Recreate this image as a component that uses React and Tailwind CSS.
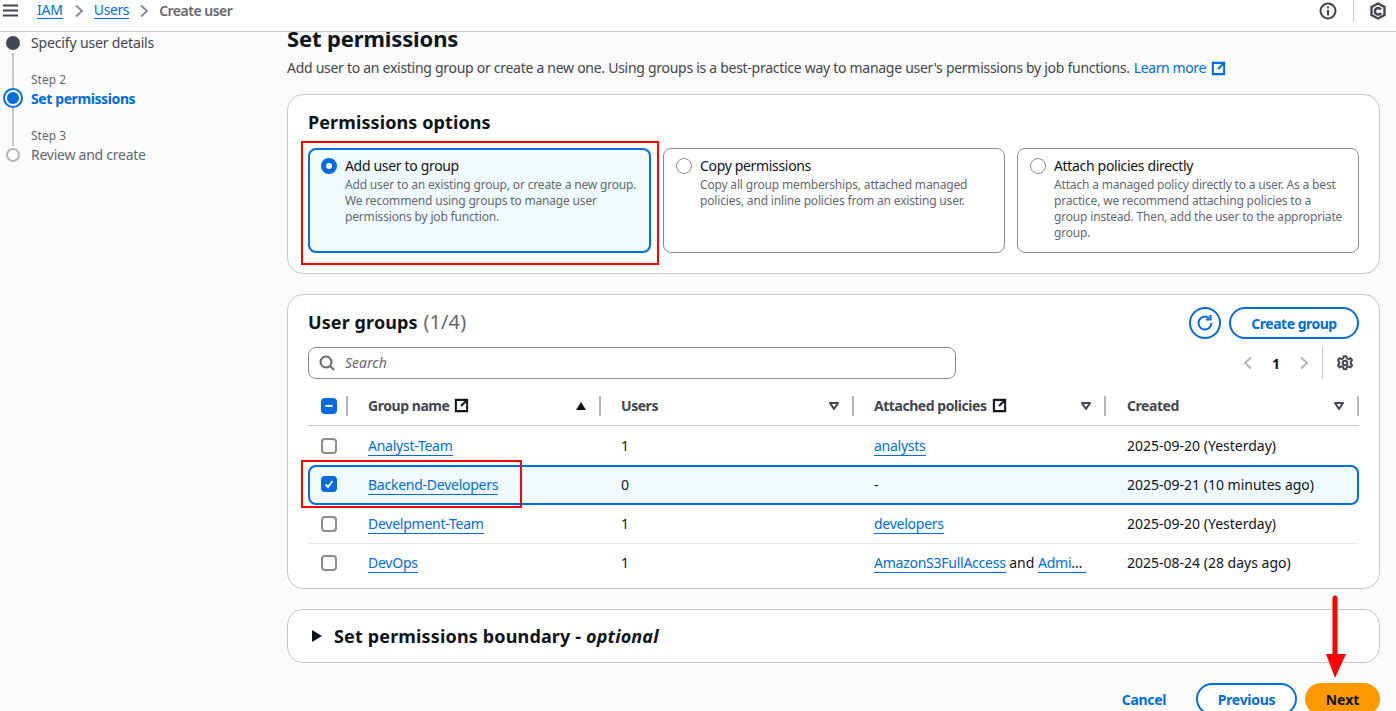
import React from "react";

const Ext = ({ className = "", s = 16 }) => (
  <svg width={s} height={s} viewBox="0 0 16 16" fill="none" stroke="currentColor" strokeWidth="2.2" className={`shrink-0 ${className}`}>
    <path d="M7 2H2v12h12V9" strokeLinecap="square" />
    <path d="M9 2h5v5" strokeLinecap="square" />
    <path d="M14 2 7.500 8.500" />
  </svg>
);

const Sep = () => <span className="block w-[2px] h-[20px] bg-[#b4b4bb]" />;

const Caret = () => (
  <svg width="12" height="10" viewBox="0 0 12 10" fill="none" stroke="#424650" strokeWidth="2" strokeLinejoin="round"><path d="M2 2h8L6 8z" /></svg>
);

const Box = ({ mode }) => {
  if (mode === "none") return <span className="block w-4 h-4 rounded-[4px] border-2 border-[#8c8c94] bg-white shrink-0" />;
  return (
    <span className="flex items-center justify-center w-4 h-4 rounded-[4px] bg-[#006ce0] shrink-0">
      <svg width="12" height="12" viewBox="0 0 12 12" fill="none" stroke="white" strokeWidth="2">
        {mode === "check" ? <path d="M2.500 6.500 5 9l4.500-6" /> : <path d="M2.500 6h7" />}
      </svg>
    </span>
  );
};

const A = ({ children }) => <a className="text-[#006ce0] border-b border-[#006ce0] leading-[17px] tracking-[-0.25px]">{children}</a>;

const Tile = ({ selected, title, lines }) => (
  <div className={`flex-1 min-w-0 h-[105px] rounded-lg flex gap-2 ${selected ? "border-2 border-[#006ce0] bg-[#f0fbff] pl-[11px] pt-[8px]" : "border border-[#8c8c94] bg-white pl-[12px] pt-[9px]"}`}>
    <span className={`w-4 h-4 rounded-full shrink-0 ${selected ? "border-[5px] border-[#006ce0] bg-white" : "border border-[#8c8c94] bg-white"}`} />
    <div className="min-w-0">
      <div className="text-[14px] leading-[16px] text-[#0f141a] tracking-[-0.33px]">{title}</div>
      <div className="text-[12px] leading-[16px] text-[#656871] mt-[3px] tracking-[-0.17px]">
        {lines.map((l) => <div key={l} className="whitespace-nowrap">{l}</div>)}
      </div>
    </div>
  </div>
);

const Row = ({ mode, name, users, policies, created, selected, top }) => (
  <div className={`grid items-center text-[14px] text-[#0f141a] ${selected ? "grid-cols-[58px_253px_253px_253px_1fr] h-[40px] -mb-px border-2 border-[#006ce0] rounded-lg bg-[#f0fbff] relative z-10 pb-px" : "grid-cols-[60px_253px_253px_253px_1fr] h-[39px]"} ${top ? "border-t border-[#e8e8ea] pb-px" : ""}`}>
    <div className={selected ? "pl-[11px] mb-[1px]" : "pl-[13px]"}><Box mode={mode} /></div>
    <div className="whitespace-nowrap"><A>{name}</A></div>
    <div>{users}</div>
    <div className="whitespace-nowrap">{policies}</div>
    <div className="whitespace-nowrap">{created}</div>
  </div>
);

const Head = ({ children, sort, ext, tight }) => (
  <div className={`flex items-center h-[39px] ${tight ? "pr-[1px]" : ""}`}>
    <span className="flex items-center gap-[5px] font-bold text-[14px] text-[#424650] whitespace-nowrap tracking-[-0.45px]">
      <span>{children}</span>
      {ext && <Ext s={15} className="text-[#0f141a]" />}
    </span>
    <span className="ml-auto flex items-center gap-[12px]">
      {sort === "up" ? (
        <svg width="12" height="10" viewBox="0 0 12 10" fill="#0f141a"><path d="M6 1 11 9H1z" /></svg>
      ) : (
        <Caret />
      )}
      <Sep />
    </span>
  </div>
);

export default function App() {
  return (
    <div className="w-[1396px] h-[711px] overflow-hidden bg-[#fbfbfb] flex flex-col relative" style={{ fontFamily: '"Noto Sans", "Open Sans", sans-serif' }}>
      <header className="h-[32px] shrink-0 bg-white border-b border-[#c6c6cd] flex items-center relative z-20 pb-[10px] pl-[3px] pr-[10px]">
        <svg width="15" height="13" viewBox="0 0 15 13" stroke="#424650" strokeWidth="2"><path d="M0 1.500h15M0 6.500h15M0 11.500h15" /></svg>
        <a className="ml-[19px] text-[14px] leading-[16px] text-[#006ce0] border-b border-[#006ce0] tracking-[-0.2px]">IAM</a>
        <svg className="ml-[11px] mr-[10px]" width="10" height="14" viewBox="0 0 10 14" fill="none" stroke="#8c8c94" strokeWidth="2"><path d="M2 1.500 8 7l-6 5.500" /></svg>
        <a className="text-[14px] leading-[16px] text-[#006ce0] border-b border-[#006ce0] tracking-[-0.4px]">Users</a>
        <svg className="ml-[10px] mr-[10px]" width="10" height="14" viewBox="0 0 10 14" fill="none" stroke="#8c8c94" strokeWidth="2"><path d="M2 1.500 8 7l-6 5.500" /></svg>
        <span className="text-[14px] font-semibold text-[#656871] tracking-[-0.5px]">Create user</span>
        <svg className="ml-auto" width="18" height="18" viewBox="0 0 18 18" fill="none" stroke="#424650" strokeWidth="2"><circle cx="9" cy="9" r="7.500" /><path d="M9 8v5.500M9 4.500v2" /></svg>
        <span className="mx-[16px] w-px h-[23px] bg-[#c6c6cd]" />
        <svg width="16" height="18" viewBox="0 0 16 18" fill="none" stroke="#424650" strokeWidth="2.4"><path d="M8 1.500 14.500 5v8L8 16.500 1.500 13V5z" /><path d="M11 7.500A3.300 3.300 0 1 0 11 11" /></svg>
      </header>

      <div className="flex-1 flex min-h-0">
        <aside className="w-[287px] shrink-0 pl-[6px] pt-[2px] text-[#424650]">
          <div className="flex gap-[11px] items-center h-[18px]">
            <span className="w-[14px] h-[14px] rounded-full bg-[#424650]" />
            <span className="text-[14px] leading-[18px] tracking-[-0.15px]">Specify user details</span>
          </div>
          <div className="flex">
            <span className="w-[2px] h-[35px] bg-[#c6c6cd] ml-[6px] mt-[1px]" />
            <span className="ml-[17px] mt-[20px] text-[12px] leading-[16px] text-[#656871]">Step 2</span>
          </div>
          <div className="flex items-center h-[20px] -ml-[3px] gap-[8px]">
            <span className="w-[20px] h-[20px] rounded-full border-2 border-[#006ce0] flex items-center justify-center"><span className="w-[12px] h-[12px] rounded-full bg-[#006ce0]" /></span>
            <span className="text-[14px] font-bold text-[#006ce0] tracking-[-0.4px]">Set permissions</span>
          </div>
          <div className="flex">
            <span className="w-[2px] h-[38px] bg-[#c6c6cd] ml-[6px]" />
            <span className="ml-[17px] mt-[20px] text-[12px] leading-[16px] text-[#656871]">Step 3</span>
          </div>
          <div className="flex gap-[11px] items-center h-[18px]">
            <span className="w-[14px] h-[14px] rounded-full border-2 border-[#b4b4bb] bg-white" />
            <span className="text-[14px] leading-[18px] text-[#656871] tracking-[-0.25px]">Review and create</span>
          </div>
        </aside>

        <main className="w-[1093px] -mt-[9px] shrink-0">
          <h1 className="text-[22px] leading-[30px] font-bold text-[#0f141a] tracking-[-0.13px]">Set permissions</h1>
          <p className="mt-[5px] text-[14px] leading-[20px] text-[#424650] flex items-center whitespace-nowrap tracking-[-0.28px]">
            Add user to an existing group or create a new one. Using groups is a best-practice way to manage user's permissions by job functions.
            <a className="ml-[4px] text-[#006ce0] tracking-[-0.4px]">Learn more</a>
            <Ext className="ml-[5px] text-[#006ce0]" s={15} />
          </p>

          <section className="mt-[16px] h-[180px] rounded-2xl border border-[#c6c6cd] bg-white px-[20px] pt-[14px]">
            <h2 className="text-[18px] leading-[26px] font-bold text-[#0f141a] tracking-[0.1px]">Permissions options</h2>
            <div className="mt-[13px] flex gap-[12px]">
              <Tile selected title="Add user to group" lines={["Add user to an existing group, or create a new group.", "We recommend using groups to manage user", "permissions by job function."]} />
              <Tile title="Copy permissions" lines={["Copy all group memberships, attached managed", "policies, and inline policies from an existing user."]} />
              <Tile title="Attach policies directly" lines={["Attach a managed policy directly to a user. As a best", "practice, we recommend attaching policies to a", "group instead. Then, add the user to the appropriate", "group."]} />
            </div>
          </section>

          <section className="mt-[20px] h-[295px] rounded-2xl border border-[#c6c6cd] bg-white px-[20px] pt-[12px]">
            <div className="flex items-center h-[32px]">
              <h2 className="text-[18px] font-bold text-[#0f141a] pb-[2px] tracking-[0.1px]">User groups <span className="font-normal text-[20px] text-[#656871] ml-[1px]">(1/4)</span></h2>
              <span className="ml-auto w-[32px] h-[32px] rounded-full border-2 border-[#006ce0] flex items-center justify-center">
                <svg width="18" height="18" viewBox="0 0 18 18" fill="none" stroke="#006ce0" strokeWidth="2"><path d="M15.500 9A6.500 6.500 0 1 1 13 3.900" /><path d="M14.500 1v4.500H10" /></svg>
              </span>
              <span className="ml-[8px] w-[130px] h-[32px] rounded-full border-2 border-[#006ce0] flex items-center justify-center text-[14px] font-bold text-[#006ce0] tracking-[-0.5px]">Create group</span>
            </div>
            <div className="mt-[8px] flex items-center h-[32px]">
              <div className="w-[648px] h-[32px] rounded-lg border border-[#8c8c94] flex items-center pl-[10px] gap-[10px]">
                <svg width="16" height="16" viewBox="0 0 16 16" fill="none" stroke="#656871" strokeWidth="2"><circle cx="7" cy="7" r="5.500" /><path d="m11 11 4 4" /></svg>
                <span className="text-[14px] italic text-[#656871] pb-[2px]">Search</span>
              </div>
              <div className="ml-auto flex items-center mr-[6px]">
                <svg width="10" height="14" viewBox="0 0 10 14" fill="none" stroke="#b4b4bb" strokeWidth="2"><path d="M8 1.500 2 7l6 5.500" /></svg>
                <span className="mx-[19px] text-[14px] font-bold text-[#0f141a]">1</span>
                <svg width="10" height="14" viewBox="0 0 10 14" fill="none" stroke="#b4b4bb" strokeWidth="2"><path d="M2 1.500 8 7l-6 5.500" /></svg>
                <span className="ml-[13px] w-px h-[32px] bg-[#c6c6cd]" />
                <svg className="ml-[14px]" width="16" height="16" viewBox="0 0 24 24" fill="none" stroke="#424650" strokeWidth="3"><circle cx="12" cy="12" r="3.500" /><path d="M10 2h4l.7 3 2.700 1.200 2.700-1.600 2.600 3-2 2.400v3.200l2 2.400-2.600 3-2.700-1.600-2.700 1.200-.7 3h-4l-.7-3-2.700-1.200-2.700 1.600-2.600-3 2-2.400v-3.200l-2-2.400 2.600-3 2.700 1.600L9.300 5z" strokeLinejoin="round" /></svg>
              </div>
            </div>
            <div className="mt-[7px] grid grid-cols-[40px_233px_233px_233px_1fr] gap-x-[20px] h-[40px] border-b border-[#c6c6cd]">
              <div className="flex items-center pl-[13px] gap-[9px]"><Box mode="minus" /><Sep /></div>
              <Head sort="up" ext>Group name</Head>
              <Head>Users</Head>
              <Head ext tight>Attached policies</Head>
              <Head>Created</Head>
            </div>
            <Row mode="none" name="Analyst-Team" users="1" policies={<A>analysts</A>} created="2025-09-20 (Yesterday)" />
            <Row selected mode="check" name="Backend-Developers" users="0" policies="-" created="2025-09-21 (10 minutes ago)" />
            <Row mode="none" name="Develpment-Team" users="1" policies={<A>developers</A>} created="2025-09-20 (Yesterday)" />
            <Row top mode="none" name="DevOps" users="1" policies={<span className="block w-[212px] truncate leading-[20px]"><A>AmazonS3FullAccess</A> and <A>AdministratorAccess</A></span>} created="2025-08-24 (28 days ago)" />
          </section>

          <section className="mt-[20px] h-[54px] rounded-2xl border border-[#c6c6cd] bg-white flex items-center pl-[23px] gap-[12px]">
            <svg width="11" height="12" viewBox="0 0 11 12" fill="#0f141a"><path d="M1 0v12l10-6z" /></svg>
            <h2 className="text-[18px] font-bold text-[#0f141a] pt-[1px] tracking-[0.15px]">Set permissions boundary - <i>optional</i></h2>
          </section>

          <div className="mt-[20px] flex items-center justify-end">
            <span className="text-[14px] font-bold text-[#006ce0] mr-[30px] tracking-[-0.35px]">Cancel</span>
            <span className="w-[101px] h-[32px] rounded-full border-2 border-[#006ce0] bg-white flex items-center justify-center text-[14px] font-bold text-[#006ce0] tracking-[-0.3px]">Previous</span>
            <span className="ml-[8px] w-[75px] h-[32px] rounded-full bg-[#ff9900] flex items-center justify-center text-[14px] font-bold text-[#0f141a]">Next</span>
          </div>
        </main>
      </div>

      <div className="absolute left-[301px] top-[141px] w-[358px] h-[124px] border-2 border-[#ff0000] z-30" />
      <div className="absolute left-[301px] top-[460px] w-[221px] h-[48px] border-2 border-[#ff0000] z-30" />
      <svg className="absolute left-[1320px] top-[590px] z-30" width="32" height="94" viewBox="0 0 32 94" fill="none">
        <path d="M15 8v60" stroke="#ff0000" strokeWidth="5" strokeLinecap="round" />
        <path d="M6 64h20L15 88z" fill="#ff0000" />
      </svg>
    </div>
  );
}
